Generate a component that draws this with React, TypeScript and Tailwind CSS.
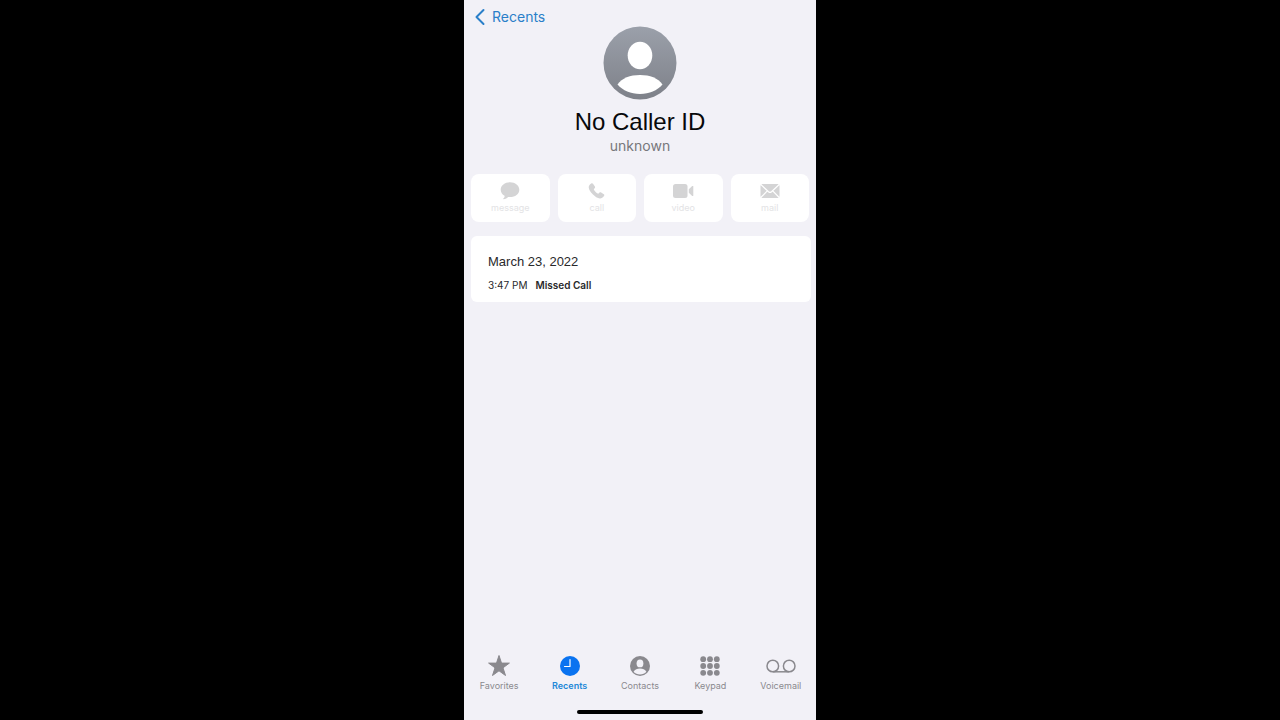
import type { ReactNode } from 'react';

function MessageIcon() {
  return (
    <svg width="20" height="18" viewBox="0 0 20 18" fill="currentColor" aria-hidden="true">
      <path d="M10 .3C4.800.3.700 3.500.700 7.700c0 2.600 1.500 4.800 3.900 6.100.2.900-.3 1.900-1.300 2.700-.3.300-.1.700.3.700 1.900-.1 3.500-1 4.600-2.200.6.100 1.200.1 1.800.1 5.200 0 9.300-3.200 9.300-7.400S15.200.3 10 .3z" />
    </svg>
  );
}

function CallIcon() {
  return (
    <svg width="18" height="18" viewBox="0 0 18 18" fill="currentColor" aria-hidden="true">
      <path d="M3.200 1.500c.6-.5 1.400-.4 1.800.2l1.900 2.700c.4.600.3 1.200-.1 1.700l-.8 1c-.2.300-.2.600 0 .9.500.9 2.700 3.100 3.700 3.600.3.200.6.100.8-.1l1-.9c.5-.4 1.100-.5 1.700-.1l2.600 1.800c.6.400.7 1.200.2 1.800-1.200 1.500-2.500 2.400-4.100 2.300-2.300-.2-5-1.900-7.200-4.200C2.400 9.900.8 7.300.7 5.200c0-1.500 1-2.700 2.500-3.700z" />
    </svg>
  );
}

function VideoIcon() {
  return (
    <svg width="22" height="18" viewBox="0 0 22 18" fill="currentColor" aria-hidden="true">
      <rect x="1" y="2" width="14.500" height="14" rx="2.500" />
      <path d="M16.800 7.200l3.400-3.100c.5-.4 1.100-.2 1.100.5v8.800c0 .7-.6.900-1.100.5l-3.400-3.100z" />
    </svg>
  );
}

function MailIcon() {
  return (
    <svg width="20" height="18" viewBox="0 0 20 18" aria-hidden="true">
      <rect x=".5" y="2" width="19" height="14" rx="2" fill="currentColor" />
      <path
        d="M.8 2.500l7.700 7.200c.9.800 2.100.8 3 0l7.700-7.200M.8 15.500l6.500-6.600M19.200 15.500l-6.500-6.600"
        fill="none"
        stroke="#fff"
        strokeWidth="1.200"
      />
    </svg>
  );
}

function StarIcon() {
  return (
    <svg width="24" height="24" viewBox="0 0 24 24" fill="currentColor" stroke="currentColor" strokeLinejoin="round" aria-hidden="true">
      <path d="M12 1.500l2.500 7.600h7.900l-6.400 4.700 2.500 7.700-6.500-4.700-6.500 4.700L8 13.800 1.600 9.100h7.900z" />
    </svg>
  );
}

function ClockIcon() {
  return (
    <svg width="24" height="24" viewBox="0 0 24 24" aria-hidden="true">
      <circle cx="12" cy="12" r="10" fill="#0a73f0" />
      <path d="M12 5.500V12.500H6.500" fill="none" stroke="#fff" strokeWidth="1.200" strokeLinecap="round" strokeLinejoin="round" />
    </svg>
  );
}

function ContactIcon() {
  return (
    <svg width="24" height="24" viewBox="0 0 24 24" aria-hidden="true">
      <circle cx="12" cy="12" r="10" fill="currentColor" />
      <ellipse cx="12" cy="9.400" rx="3.400" ry="3.900" fill="#f2f1f7" />
      <path d="M5.600 17.800c1.200-2.200 3.700-3.200 6.400-3.200s5.200 1 6.400 3.200c-1.600 1.800-3.800 2.700-6.400 2.700s-4.800-.9-6.400-2.700z" fill="#f2f1f7" />
    </svg>
  );
}

function KeypadIcon() {
  const spots = [5.200, 12, 18.800];
  return (
    <svg width="24" height="24" viewBox="0 0 24 24" fill="currentColor" aria-hidden="true">
      {spots.map((cy) => spots.map((cx) => <circle key={`${cx}-${cy}`} cx={cx} cy={cy} r="2.900" />))}
    </svg>
  );
}

function VoicemailIcon() {
  return (
    <svg width="30" height="24" viewBox="0 0 30 24" fill="none" stroke="currentColor" strokeWidth="1.500" aria-hidden="true">
      <circle cx="6.800" cy="12" r="5.800" />
      <circle cx="23.200" cy="12" r="5.800" />
      <path d="M6.800 17.800h16.400" />
    </svg>
  );
}

function Avatar() {
  return (
    <svg width="74" height="74" viewBox="0 0 74 74" role="img" aria-label="Contact photo">
      <defs>
        <linearGradient id="avatar" x1="0" y1="0" x2="0" y2="1">
          <stop offset="0" stopColor="#9ba0aa" />
          <stop offset="1" stopColor="#7e8189" />
        </linearGradient>
      </defs>
      <circle cx="37" cy="37" r="36.500" fill="url(#avatar)" />
      <ellipse cx="37" cy="29.500" rx="12.300" ry="13.700" fill="#fff" />
      <path d="M14.500 58.500C19 52 27 49 37 49s18 3 22.500 9.500C54 64.500 46.500 68 37 68s-17-3.500-22.500-9.500z" fill="#fff" />
    </svg>
  );
}

const actions: { label: string; icon: ReactNode }[] = [
  { label: 'message', icon: <MessageIcon /> },
  { label: 'call', icon: <CallIcon /> },
  { label: 'video', icon: <VideoIcon /> },
  { label: 'mail', icon: <MailIcon /> },
];

const tabs: { label: string; icon: ReactNode; active?: boolean }[] = [
  { label: 'Favorites', icon: <StarIcon /> },
  { label: 'Recents', icon: <ClockIcon />, active: true },
  { label: 'Contacts', icon: <ContactIcon /> },
  { label: 'Keypad', icon: <KeypadIcon /> },
  { label: 'Voicemail', icon: <VoicemailIcon /> },
];

export default function App() {
  return (
    <div className="flex min-h-screen justify-center bg-black font-['Inter',sans-serif]">
      <div className="flex w-full max-w-[352px] flex-col bg-[#f2f1f7]">
        <header className="flex flex-col px-2 pt-2">
          <a href="#recents" className="flex items-center gap-1 self-start text-sm leading-[18px] text-[#2a7fc9]">
            <svg width="16" height="18" viewBox="0 0 16 18" fill="none" stroke="currentColor" strokeWidth="2" strokeLinecap="round" strokeLinejoin="round" aria-hidden="true">
              <path d="M11.500 2L4.500 9l7 7" />
            </svg>
            Recents
          </a>
          <div className="flex flex-col items-center">
            <Avatar />
            <h1 className="mt-[6px] font-['Liberation_Sans',sans-serif] text-2xl leading-8 text-[#08080a]">No Caller ID</h1>
            <p className="text-sm leading-4 text-[#77777b]">unknown</p>
          </div>
        </header>

        <main className="flex grow flex-col gap-[14px] pt-5 pr-[5px] pl-[7px]">
          <div className="grid grid-cols-4 gap-2 pr-[2px]">
            {actions.map((action) => (
              <button
                key={action.label}
                type="button"
                disabled
                className="flex h-12 flex-col items-center justify-center gap-[2px] rounded-lg bg-white text-[9px] leading-3 text-[#e3e3e5]"
              >
                <span className="block h-[18px] text-[#d4d4d5]">{action.icon}</span>
                <span>{action.label}</span>
              </button>
            ))}
          </div>

          <section className="rounded-md bg-white px-[17px] pt-4 pb-2">
            <h2 className="font-['Liberation_Sans',sans-serif] text-[13px] leading-5 text-[#29292b]">March 23, 2022</h2>
            <p className="flex gap-2 pt-1 text-[10px] leading-[18px] text-[#29292b]">
              <span>3:47 PM</span>
              <span className="font-semibold">Missed Call</span>
            </p>
          </section>
        </main>

        <nav className="grid grid-cols-5 pb-[18px]">
          {tabs.map((tab) => (
            <a
              key={tab.label}
              href={`#${tab.label.toLowerCase()}`}
              className={
                tab.active
                  ? 'flex flex-col items-center gap-[2px] text-[9px] leading-3 font-semibold text-[#2388d8]'
                  : 'flex flex-col items-center gap-[2px] text-[9px] leading-3 text-[#8a898e]'
              }
            >
              {tab.icon}
              <span>{tab.label}</span>
            </a>
          ))}
        </nav>
        <div className="mb-[6px] h-1 w-[126px] self-center rounded-full bg-black" />
      </div>
    </div>
  );
}
